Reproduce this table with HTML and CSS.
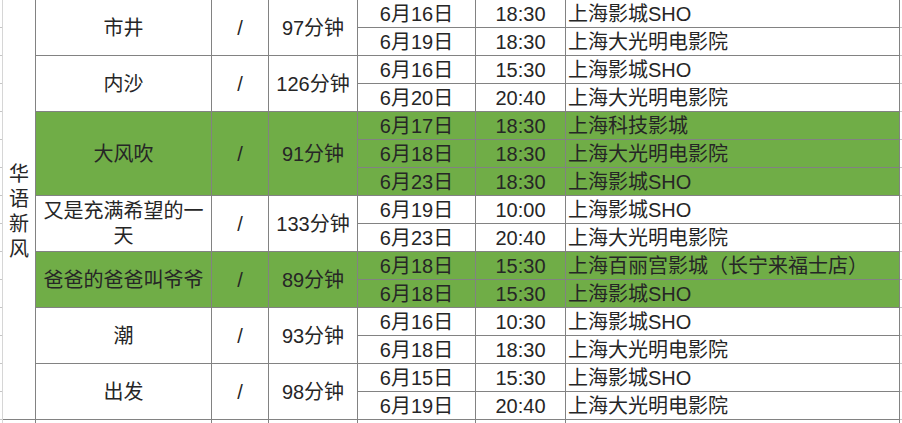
FILE: index.html
```html
<!DOCTYPE html>
<html lang="zh-CN">
<head>
<meta charset="utf-8">
<title>华语新风</title>
<link rel="stylesheet" href="styles.css">
</head>
<body>
<div class="sheet">
  <div class="c cat s15">华语新风</div>

  <div class="c title s2">市井</div><div class="c mid s2">/</div><div class="c mid s2">97分钟</div>
  <div class="c mid">6月16日</div><div class="c mid">18:30</div><div class="c cin">上海影城SHO</div>
  <div class="c mid">6月19日</div><div class="c mid">18:30</div><div class="c cin">上海大光明电影院</div>

  <div class="c title s2">内沙</div><div class="c mid s2">/</div><div class="c mid s2">126分钟</div>
  <div class="c mid">6月16日</div><div class="c mid">15:30</div><div class="c cin">上海影城SHO</div>
  <div class="c mid">6月20日</div><div class="c mid">20:40</div><div class="c cin">上海大光明电影院</div>

  <div class="c title s3 g">大风吹</div><div class="c mid s3 g">/</div><div class="c mid s3 g">91分钟</div>
  <div class="c mid g">6月17日</div><div class="c mid g">18:30</div><div class="c cin g">上海科技影城</div>
  <div class="c mid g">6月18日</div><div class="c mid g">18:30</div><div class="c cin g">上海大光明电影院</div>
  <div class="c mid g">6月23日</div><div class="c mid g">18:30</div><div class="c cin g">上海影城SHO</div>

  <div class="c title s2">又是充满希望的一天</div><div class="c mid s2">/</div><div class="c mid s2">133分钟</div>
  <div class="c mid">6月19日</div><div class="c mid">10:00</div><div class="c cin">上海影城SHO</div>
  <div class="c mid">6月23日</div><div class="c mid">20:40</div><div class="c cin">上海大光明电影院</div>

  <div class="c title s2 g">爸爸的爸爸叫爷爷</div><div class="c mid s2 g">/</div><div class="c mid s2 g">89分钟</div>
  <div class="c mid g">6月18日</div><div class="c mid g">15:30</div><div class="c cin g">上海百丽宫影城（长宁来福士店）</div>
  <div class="c mid g">6月18日</div><div class="c mid g">15:30</div><div class="c cin g">上海影城SHO</div>

  <div class="c title s2">潮</div><div class="c mid s2">/</div><div class="c mid s2">93分钟</div>
  <div class="c mid">6月16日</div><div class="c mid">10:30</div><div class="c cin">上海影城SHO</div>
  <div class="c mid">6月18日</div><div class="c mid">18:30</div><div class="c cin">上海大光明电影院</div>

  <div class="c title s2">出发</div><div class="c mid s2">/</div><div class="c mid s2">98分钟</div>
  <div class="c mid">6月15日</div><div class="c mid">15:30</div><div class="c cin">上海影城SHO</div>
  <div class="c mid">6月19日</div><div class="c mid">20:40</div><div class="c cin">上海大光明电影院</div>

  <div class="c"></div><div class="c"></div><div class="c"></div><div class="c"></div><div class="c"></div><div class="c"></div><div class="c"></div>
</div>
</body>
</html>
```
FILE: styles.css
```css
html, body {
  margin: 0;
  padding: 0;
}
body {
  width: 902px;
  height: 423px;
  overflow: hidden;
  background-color: #ffffff;
  background-image:
    repeating-linear-gradient(to bottom, transparent 0 27px, #c6c6c6 27px 28px),
    repeating-linear-gradient(to bottom, transparent 0 27px, #c6c6c6 27px 28px);
  background-size: 2px 100%, 3px 100%;
  background-position: left top, right top;
  background-repeat: no-repeat;
  font-family: "Liberation Sans", "Noto Sans CJK SC", sans-serif;
  font-size: 20px;
  color: #262626;
}
.sheet {
  margin-left: 2px;
  width: 896px;
  display: grid;
  grid-template-columns: 32px 175px 56px 88px 117px 89px 333px;
  grid-template-rows: repeat(15, 27px) 3px;
  gap: 1px;
  background: #828282;
  border-left: 1px solid #d6d6d6;
  border-right: 1px solid #828282;
}
.c {
  background: #ffffff;
  display: flex;
  align-items: center;
  justify-content: center;
  text-align: center;
  line-height: 25px;
  white-space: nowrap;
  overflow: hidden;
}
.g {
  background: #70ad47;
}
.s2 { grid-row: span 2; }
.s3 { grid-row: span 3; }
.s15 { grid-row: span 15; }
.title {
  white-space: normal;
  padding: 1px 1px 0;
}
.mid {
  padding-top: 1px;
}
.cat {
  white-space: normal;
  width: 32px;
  padding: 4px 6px 0;
  box-sizing: border-box;
  word-break: break-all;
  line-height: 25px;
}
.cin {
  justify-content: flex-start;
  text-align: left;
  padding-left: 2px;
  padding-top: 1px;
}
```
